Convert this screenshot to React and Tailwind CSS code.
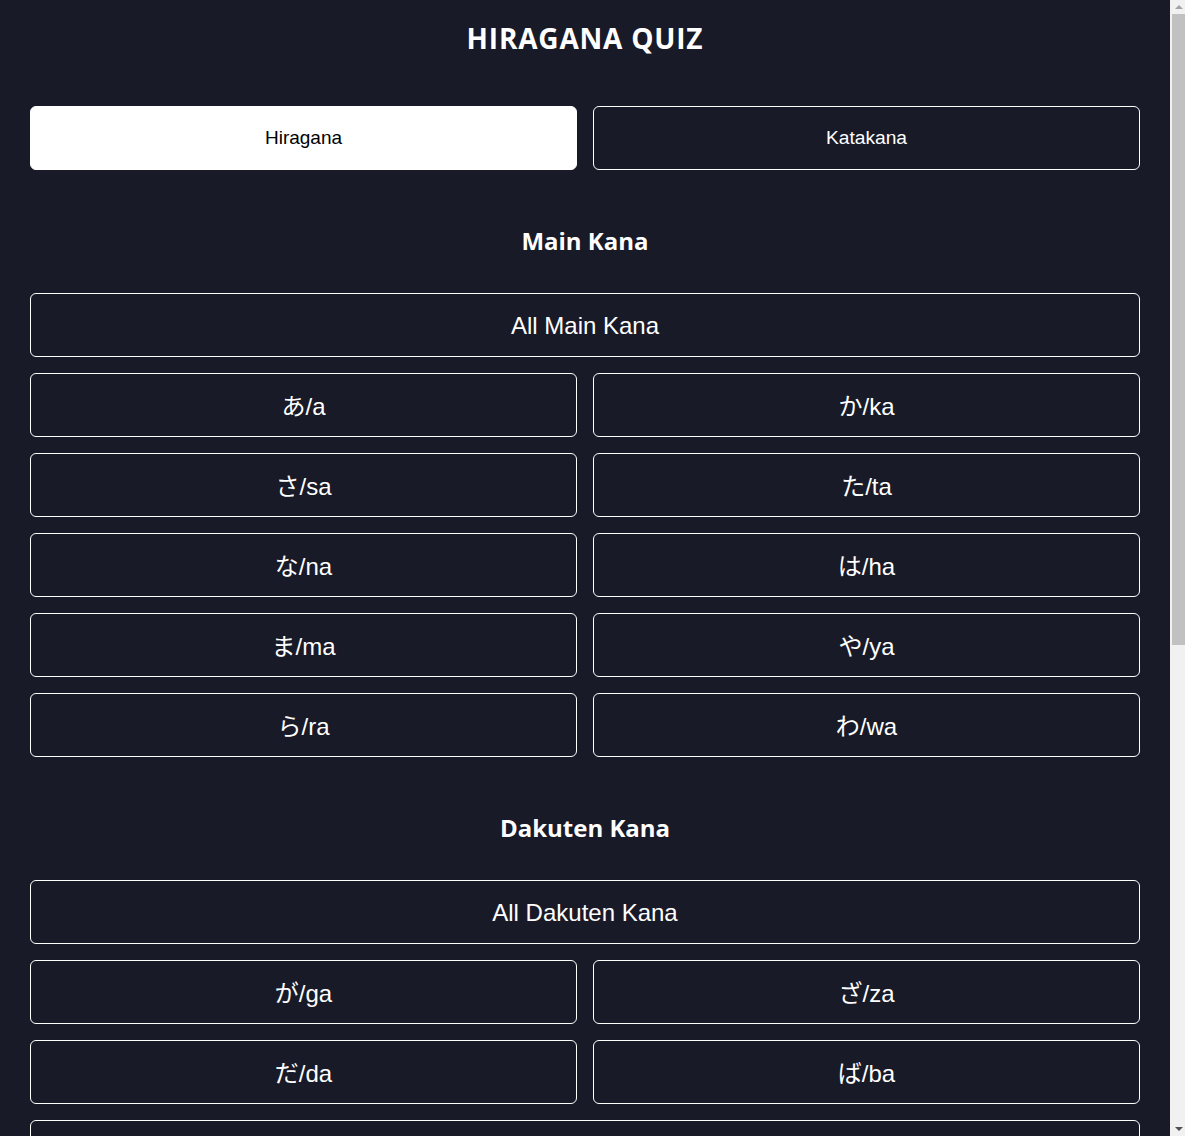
import React from "react";

const main = [
  ["あ/a", "か/ka"],
  ["さ/sa", "た/ta"],
  ["な/na", "は/ha"],
  ["ま/ma", "や/ya"],
  ["ら/ra", "わ/wa"],
];
const dakuten = [
  ["が/ga", "ざ/za"],
  ["だ/da", "ば/ba"],
  ["ぱ/pa"],
];
const combo = [
  ["きゃ/kya", "しゃ/sha"],
  ["ちゃ/cha", "にゃ/nya"],
  ["ひゃ/hya", "みゃ/mya"],
  ["りゃ/rya", "ぎゃ/gya"],
];

const btnFont = { fontFamily: '"Liberation Sans", "Noto Sans CJK JP", sans-serif' };

function KanaButton({ label, kana, wide }) {
  const base = "h-16 w-full rounded-md border border-white bg-transparent text-[24px] text-white";
  const pad = kana ? " pt-[3px]" : " pt-[1px]";
  const span = wide ? " col-span-2" : "";
  return (
    <button className={base + pad + span} style={btnFont}>
      {label}
    </button>
  );
}

function Section({ title, all, rows }) {
  const items = rows.flat();
  return (
    <section className="mt-[55px]">
      <h2 className="mb-9 text-center text-[24px] font-bold leading-8 text-white" style={{ fontFamily: '"Open Sans", sans-serif' }}>
        {title}
      </h2>
      <div className="flex flex-col gap-4">
        <KanaButton label={all} />
        <div className="grid grid-cols-2 gap-4">
          {items.map((l, i) => (
            <KanaButton key={l} label={l} kana wide={items.length % 2 === 1 && i === items.length - 1} />
          ))}
        </div>
      </div>
    </section>
  );
}

function FakeScrollbar() {
  return (
    <div className="fixed right-0 top-0 flex h-screen w-[15px] flex-col bg-[#f1f1f1] pl-[2px]">
      <div className="flex h-[14px] items-center justify-center">
        <div className="h-0 w-0 border-x-[4px] border-b-[4px] border-x-transparent border-b-[#a3a3a3]" />
      </div>
      <div className="h-[631px] w-full bg-[#c1c1c1]" />
      <div className="flex-1" />
      <div className="flex h-[14px] items-center justify-center">
        <div className="h-0 w-0 border-x-[4px] border-t-[4px] border-x-transparent border-t-[#505050]" />
      </div>
    </div>
  );
}

export default function App() {
  return (
    <div className="min-h-screen bg-[#181a27] pb-16 pl-[30px] pr-[45px] pt-5">
      <h1
        className="text-center text-[28px] font-bold leading-9 tracking-[0.8px] text-white"
        style={{ fontFamily: '"Open Sans", sans-serif' }}
      >
        HIRAGANA QUIZ
      </h1>
      <div className="mt-[50px] grid grid-cols-2 gap-4">
        <button className="h-16 rounded-md border border-white bg-white text-[19px] text-black" style={btnFont}>
          Hiragana
        </button>
        <button className="h-16 rounded-md border border-white bg-transparent text-[19.2px] text-white" style={btnFont}>
          Katakana
        </button>
      </div>
      <Section title="Main Kana" all="All Main Kana" rows={main} />
      <Section title="Dakuten Kana" all="All Dakuten Kana" rows={dakuten} />
      <Section title="Combination Kana" all="All Combination Kana" rows={combo} />
      <FakeScrollbar />
    </div>
  );
}
